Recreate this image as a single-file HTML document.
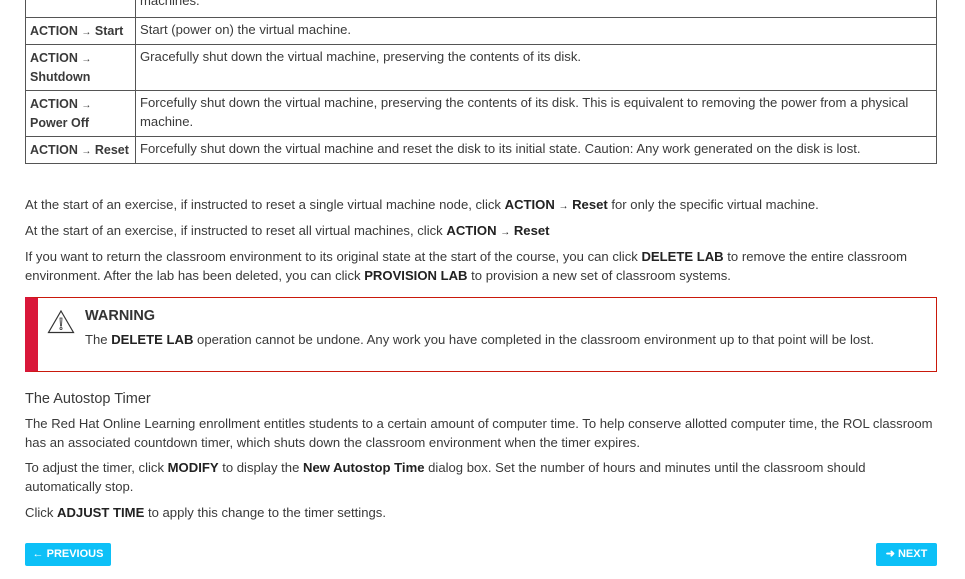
<!DOCTYPE html>
<html><head><style>
body{margin:0;width:965px;height:579px;overflow:hidden;background:#fff;font-family:"Liberation Sans",sans-serif;font-size:13.1px;color:#3a3a3a;position:relative}
table{position:absolute;left:25px;top:-9px;width:912px;border-collapse:collapse;table-layout:fixed}
td{border:1px solid #555;padding:3px 4px 4px 4px;vertical-align:top;line-height:18.5px}
td.k{font-weight:bold;padding:4px 3px 3px 4px;font-size:12.5px;white-space:nowrap}
.a{font-size:10px;line-height:10px}
.p{position:absolute;left:25px;width:912px;line-height:18.5px;margin:0}
b{font-weight:bold;color:#222}
.warn{position:absolute;left:25px;top:297px;height:73px;border:1px solid #c9190b;border-left:13px solid #d9173a;width:898px}
.btn{position:absolute;top:543px;height:23px;background:#0dc0f7;border-radius:2px;color:#fff;font-size:11px;line-height:23px;font-weight:bold}
</style></head><body>
<table>
<colgroup><col style="width:110px"><col></colgroup>
<tr><td class="k" style="height:18px"></td><td style="padding-top:0">machines.</td></tr>
<tr><td class="k" style="height:19px">ACTION <span class="a">→</span> Start</td><td>Start (power on) the virtual machine.</td></tr>
<tr><td class="k" style="height:38px">ACTION <span class="a">→</span><br>Shutdown</td><td>Gracefully shut down the virtual machine, preserving the contents of its disk.</td></tr>
<tr><td class="k" style="height:38px">ACTION <span class="a">→</span><br>Power Off</td><td>Forcefully shut down the virtual machine, preserving the contents of its disk. This is equivalent to removing the power from a physical machine.</td></tr>
<tr><td class="k" style="height:18px">ACTION <span class="a">→</span> Reset</td><td>Forcefully shut down the virtual machine and reset the disk to its initial state. Caution: Any work generated on the disk is lost.</td></tr>
</table>
<p class="p" style="top:196px">At the start of an exercise, if instructed to reset a single virtual machine node, click <b>ACTION <span class="a">→</span> Reset</b> for only the specific virtual machine.</p>
<p class="p" style="top:222px">At the start of an exercise, if instructed to reset all virtual machines, click <b>ACTION <span class="a">→</span> Reset</b></p>
<p class="p" style="top:248px">If you want to return the classroom environment to its original state at the start of the course, you can click <b>DELETE LAB</b> to remove the entire classroom environment. After the lab has been deleted, you can click <b>PROVISION LAB</b> to provision a new set of classroom systems.</p>
<div class="warn">
<svg style="position:absolute;left:9px;top:12px" width="28" height="24" viewBox="0 0 28 24"><path d="M14 1 L26.5 22.5 H1.5 Z" fill="none" stroke="#333" stroke-width="1.2"/><path d="M13 8 h2 l-.5 8 h-1 Z" fill="none" stroke="#333" stroke-width=".8"/><circle cx="14" cy="18.5" r="1.1" fill="none" stroke="#333" stroke-width=".8"/></svg>
<div style="position:absolute;left:47px;top:10px;font-size:14.5px;font-weight:bold;color:#333">WARNING</div>
<div style="position:absolute;left:47px;top:34px">The <b>DELETE LAB</b> operation cannot be undone. Any work you have completed in the classroom environment up to that point will be lost.</div>
</div>
<div class="p" style="top:390px;font-size:14.5px">The Autostop Timer</div>
<p class="p" style="top:415px">The Red Hat Online Learning enrollment entitles students to a certain amount of computer time. To help conserve allotted computer time, the ROL classroom has an associated countdown timer, which shuts down the classroom environment when the timer expires.</p>
<p class="p" style="top:459px">To adjust the timer, click <b>MODIFY</b> to display the <b>New Autostop Time</b> dialog box. Set the number of hours and minutes until the classroom should automatically stop.</p>
<p class="p" style="top:504px">Click <b>ADJUST TIME</b> to apply this change to the timer settings.</p>
<div class="btn" style="left:25px;width:86px;text-align:center">&#8592; PREVIOUS</div>
<div class="btn" style="left:876px;width:61px;text-align:center">&#10140; NEXT</div>
</body></html>
